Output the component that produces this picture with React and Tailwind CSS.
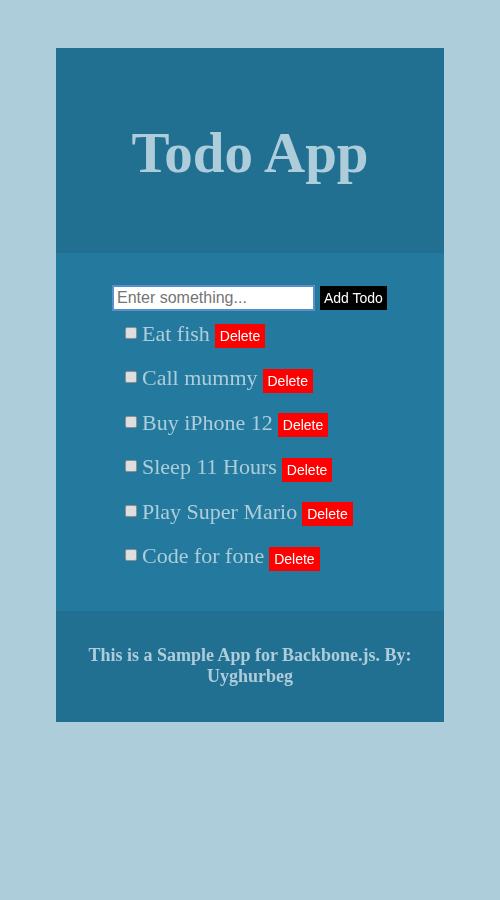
import React, { useState } from 'react';

const serif = { fontFamily: '"Liberation Serif", "Times New Roman", serif' };
const sans = { fontFamily: '"Liberation Sans", Arial, sans-serif' };

const App = () => {
    const [todos, setTodos] = useState([
        'Eat fish',
        'Call mummy',
        'Buy iPhone 12',
        'Sleep 11 Hours',
        'Play Super Mario',
        'Code for fone'
    ]);
    const [text, setText] = useState('');

    const addTodo = () => {
        if (!text.trim()) return;
        setTodos([...todos, text]);
        setText('');
    };

    return (
        <div className="min-h-[900px] bg-[#aecdda] pt-[48px]">
            <div className="mx-auto w-[388px]">
                {/* Header */}
                <header className="h-[205px] bg-[#216f91] flex items-center justify-center pt-[4px]">
                    <h1 className="text-[57px] font-bold text-[#aecdda] leading-none" style={serif}>Todo App</h1>
                </header>

                {/* Todo list */}
                <section className="bg-[#237a9e] pt-[32px] pb-[40px]">
                    <div className="w-[276px] mx-auto">
                        <div className="flex items-start gap-[5px]">
                            <input
                                type="text"
                                autoFocus
                                value={text}
                                onChange={(e) => setText(e.target.value)}
                                placeholder="Enter something..."
                                className="w-[203px] h-[26px] px-[3px] bg-white border-2 border-[#5b8fcc] text-[16px] text-black placeholder:text-[#757575] outline-none"
                                style={sans}
                            />
                            <button
                                onClick={addTodo}
                                className="h-[24px] mt-[1px] px-[4px] bg-black text-white text-[14px] leading-none"
                                style={sans}
                            >
                                Add Todo
                            </button>
                        </div>
                        <ul className="mt-[13px] pl-[13px] flex flex-col gap-[20.5px]">
                            {todos.map((todo, i) => (
                                <li key={i} className="flex items-center h-[24px]">
                                    <input
                                        type="checkbox"
                                        className="appearance-none shrink-0 w-[12px] h-[12px] mb-[7px] mr-[5px] border border-[#8e8e8e] bg-[#dedede] rounded-[2px] checked:bg-[#9ec1d6]"
                                    />
                                    <span className="text-[22px] text-[#aecdda] pb-[6px] whitespace-nowrap" style={serif}>{todo}</span>
                                    <button
                                        onClick={() => setTodos(todos.filter((_, j) => j !== i))}
                                        className="ml-[5px] h-[24px] px-[5px] bg-[#ff0000] text-white text-[14px] leading-none"
                                        style={sans}
                                    >
                                        Delete
                                    </button>
                                </li>
                            ))}
                        </ul>
                    </div>
                </section>

                {/* Footer */}
                <footer className="h-[111px] bg-[#216f91] flex items-center justify-center px-[30px] text-center">
                    <p className="text-[18px] leading-[21px] font-bold text-[#aecdda]" style={serif}>
                        This is a Sample App for Backbone.js. By: Uyghurbeg
                    </p>
                </footer>
            </div>
        </div>
    );
};

export default App;
